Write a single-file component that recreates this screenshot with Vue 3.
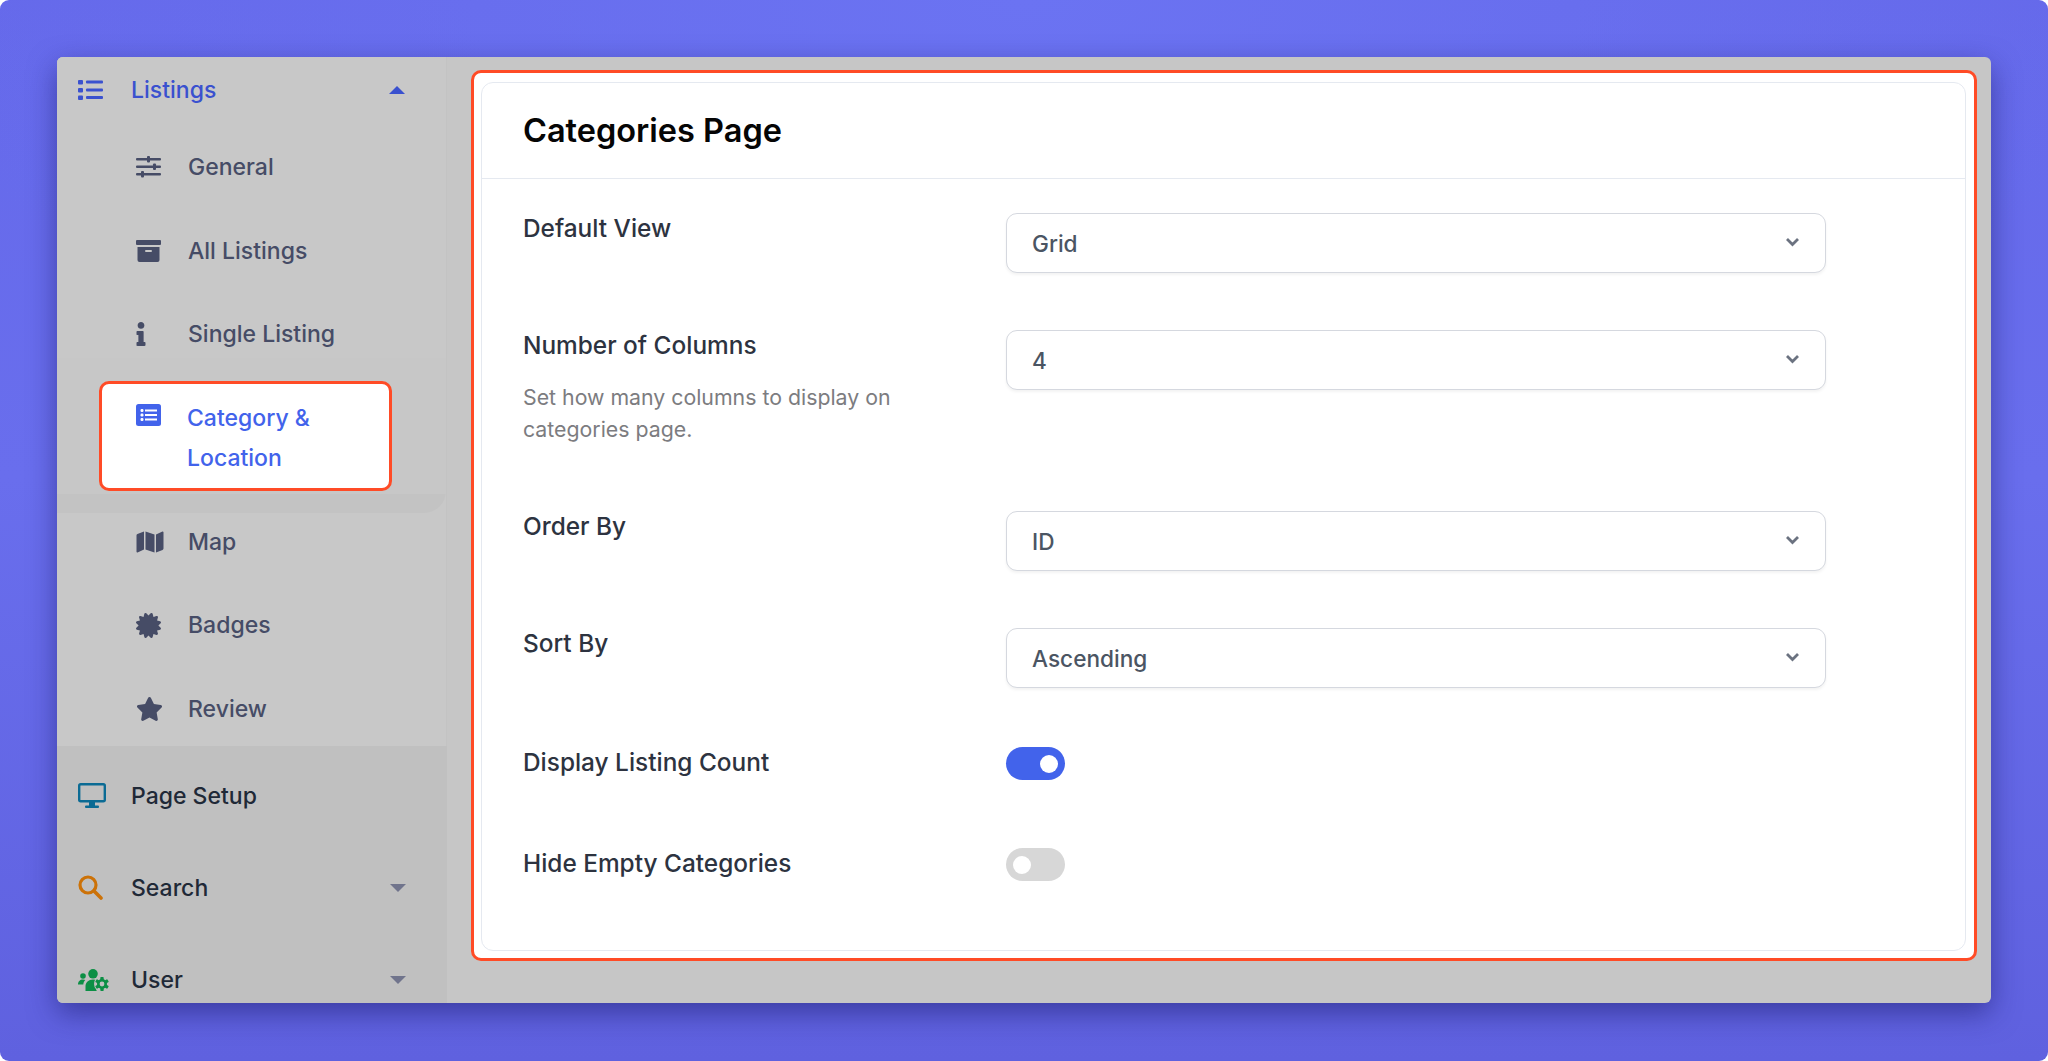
<template>
  <div class="page">
    <div class="window">
      <aside class="sidebar">
        <div class="group-open">
          <div class="top-row listings">
            <span class="top-icon">
              <svg width="25" height="20" viewBox="0 0 25 20" fill="currentColor">
                <rect x="0" y="0" width="5" height="4.5" rx="1" />
                <rect x="0" y="8" width="5" height="4.5" rx="1" />
                <rect x="0" y="15.5" width="5" height="4.5" rx="1" />
                <rect x="8" y="0.5" width="17" height="3" rx="1" />
                <rect x="8" y="8.5" width="17" height="3" rx="1" />
                <rect x="8" y="16" width="17" height="3" rx="1" />
              </svg>
            </span>
            <span>Listings</span>
            <span class="caret up"></span>
          </div>

          <ul class="sub-list">
            <li class="sub-item">
              <span class="sub-icon">
                <svg width="25" height="22" viewBox="0 0 25 22" fill="currentColor">
                  <rect x="0" y="2" width="25" height="2.5" rx="1" />
                  <rect x="0" y="9.5" width="25" height="2.5" rx="1" />
                  <rect x="0" y="17" width="25" height="2.5" rx="1" />
                  <rect x="11" y="0" width="3" height="6.5" rx="1" />
                  <rect x="17" y="7.5" width="3" height="6.5" rx="1" />
                  <rect x="5" y="15" width="3" height="6.5" rx="1" />
                </svg>
              </span>
              General
            </li>
            <li class="sub-item">
              <span class="sub-icon">
                <svg width="25" height="22" viewBox="0 0 25 22" fill="currentColor">
                  <rect x="0" y="0" width="25" height="5" rx="1" />
                  <path d="M1.5 7h22v13a2 2 0 0 1-2 2h-18a2 2 0 0 1-2-2z" />
                  <rect x="9" y="10" width="7" height="2" rx="1" fill="#c8c8c8" />
                </svg>
              </span>
              All Listings
            </li>
            <li class="sub-item">
              <span class="sub-icon">
                <svg width="10" height="24" viewBox="0 0 192 512" fill="currentColor">
                  <path d="M20 424.229h20V279.771H20c-11.046 0-20-8.954-20-20V212c0-11.046 8.954-20 20-20h112c11.046 0 20 8.954 20 20v212.229h20c11.046 0 20 8.954 20 20V492c0 11.046-8.954 20-20 20H20c-11.046 0-20-8.954-20-20v-47.771c0-11.046 8.954-20 20-20zM96 0C56.235 0 24 32.235 24 72s32.235 72 72 72 72-32.235 72-72S135.764 0 96 0z" />
                </svg>
              </span>
              Single Listing
            </li>
            <li class="sub-item active">
              <span class="sub-icon">
                <svg width="25" height="22" viewBox="0 0 25 22">
                  <rect width="25" height="22" rx="2.5" fill="currentColor" />
                  <g fill="#fff">
                    <rect x="4.5" y="5" width="3" height="3" rx="1.2" />
                    <rect x="4.5" y="9.5" width="3" height="3" rx="1.2" />
                    <rect x="4.5" y="14" width="3" height="3" rx="1.2" />
                    <rect x="9" y="5.5" width="12" height="2" />
                    <rect x="9" y="10" width="12" height="2" />
                    <rect x="9" y="14.5" width="12" height="2" />
                  </g>
                </svg>
              </span>
              <span class="active-text">Category &amp; Location</span>
            </li>
            <li class="sub-item">
              <span class="sub-icon">
                <svg width="28" height="24" viewBox="0 0 576 512" fill="currentColor">
                  <path d="M0 117.66v346.32c0 11.32 11.43 19.06 21.94 14.86L160 416V32L20.12 87.95A32.006 32.006 0 0 0 0 117.66zM192 416l192 64V96L192 32v384zM554.06 33.16L416 96v384l139.88-55.95A31.996 31.996 0 0 0 576 394.34V48.02c0-11.32-11.43-19.06-21.94-14.86z" />
                </svg>
              </span>
              Map
            </li>
            <li class="sub-item">
              <span class="sub-icon">
                <svg width="25" height="25" viewBox="0 0 512 512" fill="currentColor">
                  <path d="M458.622 255.92l45.985-45.005c13.708-12.977 7.316-36.039-10.664-40.339l-62.65-15.99 17.661-62.015c4.991-17.838-11.829-34.663-29.661-29.671l-61.994 17.667-15.984-62.671C337.085.197 313.765-6.276 300.99 7.228L256 53.57 211.011 7.229c-12.63-13.351-36.047-7.234-40.325 10.668l-15.984 62.671-61.995-17.667C74.87 57.907 58.056 74.738 63.046 92.572l17.661 62.015-62.65 15.99C.069 174.878-6.31 197.944 7.392 210.915l45.985 45.005-45.985 45.004c-13.708 12.977-7.316 36.039 10.664 40.339l62.65 15.99-17.661 62.015c-4.991 17.838 11.829 34.663 29.661 29.671l61.994-17.667 15.984 62.671c4.439 18.575 27.696 24.018 40.325 10.668L256 458.61l44.989 46.001c12.5 13.488 35.987 7.486 40.325-10.668l15.984-62.671 61.994 17.667c17.832 4.992 34.652-11.833 29.661-29.671l-17.661-62.015 62.65-15.99c17.989-4.302 24.366-27.367 10.664-40.339l-45.984-45.004z" />
                </svg>
              </span>
              Badges
            </li>
            <li class="sub-item">
              <span class="sub-icon">
                <svg width="27" height="24" viewBox="0 0 576 512" fill="currentColor">
                  <path d="M259.3 17.8L194 150.2 47.9 171.5c-26.2 3.8-36.7 36.1-17.7 54.6l105.7 103-25 145.5c-4.5 26.3 23.2 46 46.4 33.7L288 439.6l130.7 68.7c23.2 12.2 50.9-7.4 46.4-33.7l-25-145.5 105.7-103c19-18.5 8.5-50.8-17.7-54.6L382 150.2 316.7 17.8c-11.7-23.6-45.6-23.9-57.4 0z" />
                </svg>
              </span>
              Review
            </li>
          </ul>
        </div>

        <div class="group-closed">
          <div class="top-row">
            <span class="top-icon">
              <svg width="28" height="25" viewBox="0 0 28 25" fill="none" class="ic-desktop">
                <rect x="1.2" y="1.2" width="25.6" height="17" rx="1.5" stroke="currentColor" stroke-width="2.4" />
                <rect x="11" y="19" width="6" height="4" fill="currentColor" />
                <rect x="7" y="22.5" width="14" height="2.5" rx="1" fill="currentColor" />
              </svg>
            </span>
            <span>Page Setup</span>
          </div>
          <div class="top-row">
            <span class="top-icon">
              <svg width="25" height="25" viewBox="0 0 25 25" fill="none" class="ic-search">
                <circle cx="10" cy="10" r="8" stroke="currentColor" stroke-width="3.2" />
                <path d="M16 16l7 7" stroke="currentColor" stroke-width="3.6" stroke-linecap="round" />
              </svg>
            </span>
            <span>Search</span>
            <span class="caret"></span>
          </div>
          <div class="top-row">
            <span class="top-icon">
              <svg width="31" height="22" viewBox="0 0 31 22" class="ic-users">
                <g fill="currentColor">
                  <circle cx="5" cy="7" r="2.8" />
                  <path d="M0 15.500c0-3 2-5 5-5 1 0 1.700.2 2.300.6C6 12.300 5.500 14 5.300 15.500z" />
                  <circle cx="15" cy="4.800" r="4.800" />
                  <path d="M7.500 22v-4.500c0-4 3-7 7.500-7 1.500 0 2.700.3 3.700.8-1 3-1 7.500 0 10.700z" />
                </g>
                <circle cx="24" cy="15" r="8" fill="#c0c0c0" />
                <g fill="currentColor">
                  <rect x="22.300" y="8" width="3.400" height="14" rx="0.800" />
                  <rect x="22.300" y="8" width="3.400" height="14" rx="0.800" transform="rotate(60 24 15)" />
                  <rect x="22.300" y="8" width="3.400" height="14" rx="0.800" transform="rotate(120 24 15)" />
                </g>
                <circle cx="24" cy="15" r="3.700" fill="none" stroke="currentColor" stroke-width="2.600" />
                <circle cx="24" cy="15" r="2.400" fill="#c0c0c0" />
              </svg>
            </span>
            <span>User</span>
            <span class="caret"></span>
          </div>
        </div>
      </aside>

      <main class="main">
        <div class="highlight">
          <section class="card">
            <h2 class="card-title">Categories Page</h2>
            <div class="card-body">
              <div v-for="field in selects" :key="field.label" class="row">
                <div class="label-col">
                  <div class="label">{{ field.label }}</div>
                  <p v-if="field.help" class="help">{{ field.help }}</p>
                </div>
                <div class="select-wrap">
                  <select v-model="field.value" class="select">
                    <option>{{ field.value }}</option>
                  </select>
                  <svg class="chevron" width="15" height="10" viewBox="0 0 15 10" fill="none">
                    <path d="M2 2l5.500 5.500L13 2" stroke="currentColor" stroke-width="2.800" />
                  </svg>
                </div>
              </div>

              <div v-for="item in toggles" :key="item.label" class="row toggle-row">
                <div class="label-col">
                  <div class="label">{{ item.label }}</div>
                </div>
                <span class="toggle" :class="{ on: item.on }"><span class="knob"></span></span>
              </div>
            </div>
          </section>
        </div>
      </main>
    </div>
  </div>
</template>

<script setup>
import { reactive } from 'vue';

const selects = reactive([
  { label: 'Default View', value: 'Grid' },
  {
    label: 'Number of Columns',
    value: '4',
    help: 'Set how many columns to display on categories page.',
  },
  { label: 'Order By', value: 'ID' },
  { label: 'Sort By', value: 'Ascending' },
]);

const toggles = reactive([
  { label: 'Display Listing Count', on: true },
  { label: 'Hide Empty Categories', on: false },
]);
</script>

<style>
html,
body {
  margin: 0;
  background: #fff;
}
</style>

<style scoped>
* {
  box-sizing: border-box;
}

.page {
  width: 2048px;
  height: 1061px;
  padding: 57px;
  overflow: hidden;
  border-radius: 9px;
  background:
    radial-gradient(ellipse 1100px 520px at 50% 0, #6b73f2 0%, rgba(107, 115, 242, 0) 100%),
    linear-gradient(180deg, #6569ea 0%, #696eed 45%, #5f61df 100%);
  font-family: Inter, 'Liberation Sans', sans-serif;
}

.window {
  display: flex;
  width: 1934px;
  height: 946px;
  overflow: hidden;
  border-radius: 6px;
  background: #c6c6c6;
  box-shadow: 0 10px 28px rgba(28, 28, 110, 0.55);
}

.sidebar {
  flex: none;
  width: 390px;
  background: #c0c0c0;
}

.group-open {
  border-right: 1px solid #c3c3c3;
  background: #c8c8c8;
}

.group-closed {
  padding-top: 4px;
}

.top-row {
  display: flex;
  align-items: center;
  height: 92px;
  padding-left: 21px;
  color: #1f2937;
  font-size: 23px;
  font-weight: 500;
}

.top-row.listings {
  height: 66px;
  color: #3a51cf;
}

.top-icon {
  display: flex;
  flex: none;
  width: 53px;
}

.ic-desktop {
  color: #0b6b94;
}

.ic-search {
  color: #cc7208;
}

.ic-users {
  color: #0c8f45;
}

.caret {
  width: 0;
  height: 0;
  margin-left: auto;
  margin-right: 41px;
  border-left: 8px solid transparent;
  border-right: 8px solid transparent;
  border-top: 8px solid #70748c;
}

.caret.up {
  border-top: 0;
  border-bottom: 8px solid #3a51cf;
}

.sub-list {
  display: flex;
  flex-direction: column;
  gap: 19.500px;
  margin: 0;
  padding: 12px 0 5px;
  list-style: none;
}

.sub-item {
  display: flex;
  align-items: center;
  height: 64px;
  padding-left: 79px;
  color: #464c66;
  font-size: 23px;
  font-weight: 500;
}

.sub-icon {
  display: flex;
  flex: none;
  width: 52px;
}

.sub-item.active {
  position: relative;
  align-items: flex-start;
  width: 293px;
  height: 110px;
  margin: -4.500px 0 -1px 42px;
  padding: 14px 20px 0 34px;
  border: 3px solid #ff4b26;
  border-radius: 10px;
  background: #fff;
  color: #4263eb;
  line-height: 40px;
}

/* darker band the open row leaves under itself */
.sub-item.active::before {
  content: '';
  position: absolute;
  z-index: 0;
  top: -26px;
  left: -45px;
  right: -57px;
  bottom: -25px;
  border-radius: 0 0 22px 0;
  background: linear-gradient(180deg, #c7c7c7 0, #c7c7c7 88%, #c3c3c3 88%);
}

.sub-item.active::after {
  content: '';
  position: absolute;
  z-index: 1;
  inset: -3px;
  border: 3px solid #ff4b26;
  border-radius: 10px;
  background: #fff;
}

.sub-item.active > * {
  position: relative;
  z-index: 2;
}

.sub-item.active .sub-icon {
  width: 51px;
  margin-top: 6px;
}

.main {
  flex: 1;
  min-width: 0;
  padding: 13px 14px 0 24px;
}

.highlight {
  height: 891px;
  padding: 9px 8px 7px 7px;
  border: 3px solid #ff4b26;
  border-radius: 10px;
  background: #fff;
}

.card {
  height: 869px;
  border: 1.500px solid #e5e9f0;
  border-radius: 12px;
  background: #fff;
}

.card-title {
  height: 96px;
  margin: 0;
  padding: 0 41px;
  border-bottom: 1.500px solid #e5e9f0;
  color: #050505;
  font-size: 32.500px;
  font-weight: 600;
  line-height: 96px;
}

.card-body {
  padding: 34px 41px 0;
}

.row {
  display: flex;
  align-items: flex-start;
  margin-bottom: 57px;
}

.label-col {
  flex: none;
  width: 483px;
  padding-top: 1px;
}

.label {
  color: #2d3340;
  font-size: 24.400px;
  font-weight: 500;
  line-height: 28px;
}

.help {
  width: 400px;
  margin: 22px 0 9px;
  color: #7c7c80;
  font-size: 21.300px;
  line-height: 32px;
}

.select-wrap {
  position: relative;
  width: 820px;
  height: 60px;
}

.select {
  width: 100%;
  height: 100%;
  padding: 0 25px;
  border: 1.500px solid #d5d8df;
  border-radius: 11px;
  background: #fff;
  box-shadow: 0 2px 3px rgba(0, 0, 0, 0.05);
  color: #4b5563;
  font-family: inherit;
  font-size: 22.600px;
  font-weight: 500;
  appearance: none;
}

.chevron {
  position: absolute;
  top: 24px;
  right: 26px;
  color: #6b7280;
  pointer-events: none;
}

.toggle-row {
  margin-top: 59px;
  margin-bottom: 68px;
}

.toggle-row + .toggle-row {
  margin-top: 0;
}

.toggle {
  display: flex;
  align-items: center;
  width: 59px;
  height: 33px;
  padding: 0 7px;
  border-radius: 17px;
  background: #d7d7d7;
}

.toggle.on {
  justify-content: flex-end;
  background: #4263eb;
}

.knob {
  width: 18px;
  height: 18px;
  border-radius: 50%;
  background: #fff;
}
</style>
